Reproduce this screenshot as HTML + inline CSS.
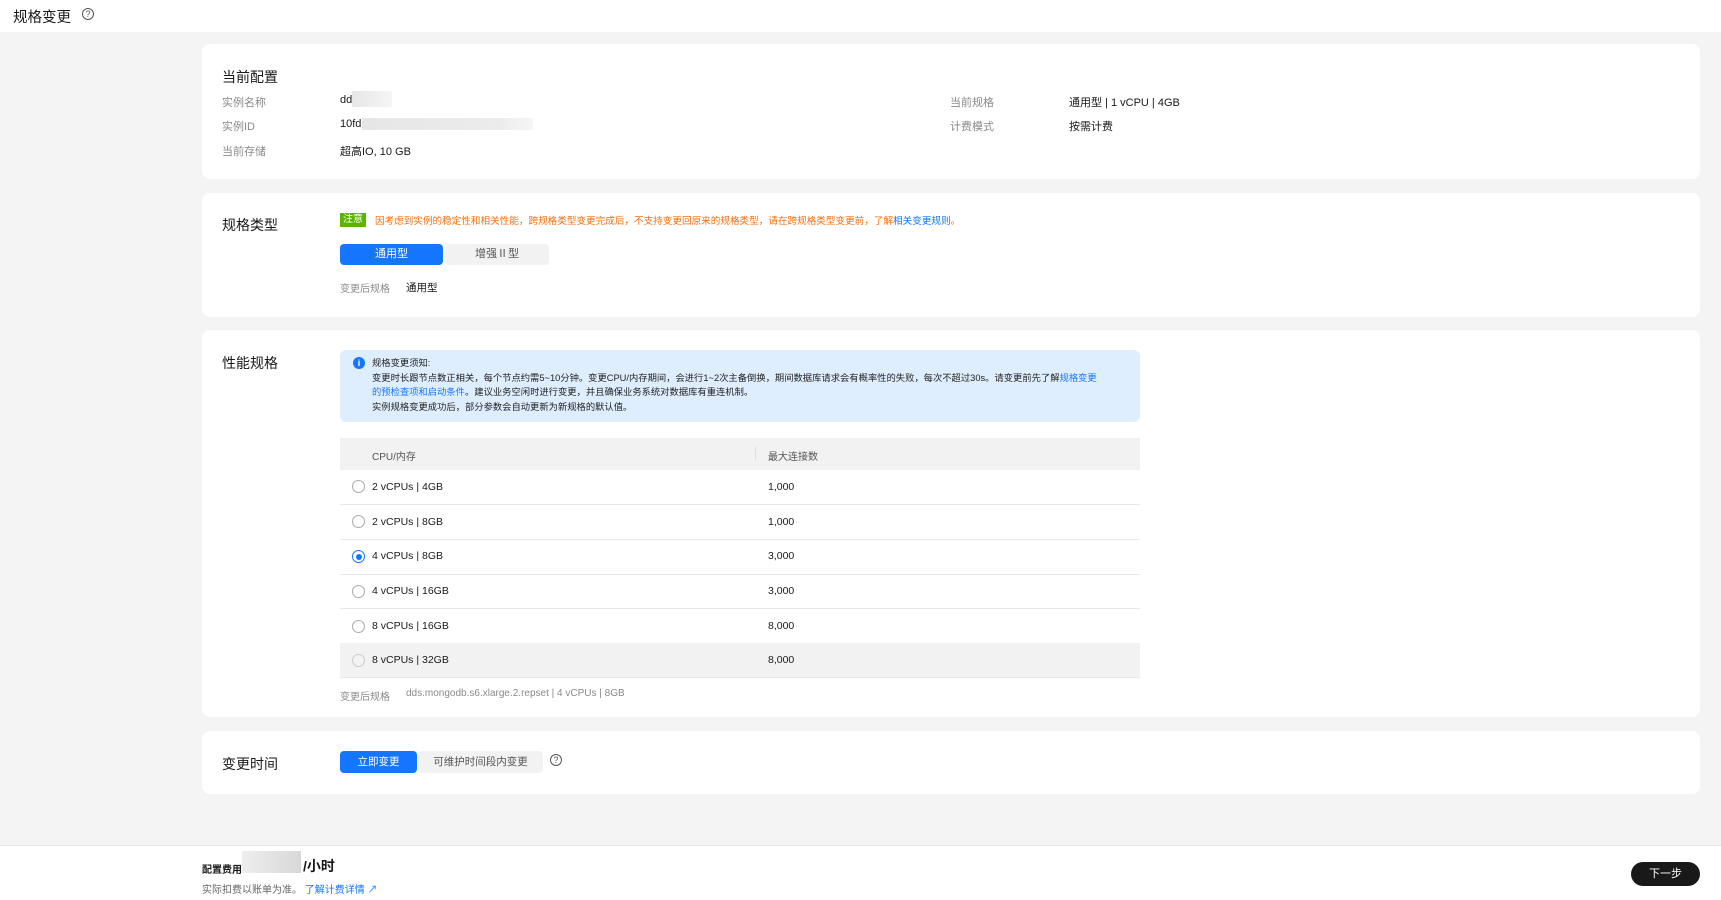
<!DOCTYPE html>
<html><head><meta charset="utf-8"><style>
*{margin:0;padding:0;box-sizing:border-box}
body{width:1721px;height:900px;background:#f4f4f4;font-family:"Liberation Sans","Noto Sans CJK SC",sans-serif;position:relative;overflow:hidden;color:#191919;font-size:11px}
.a{position:absolute;white-space:nowrap}
.card{position:absolute;left:202px;width:1498px;background:#fff;border-radius:8px}
.lbl{color:#8a8a8a}
.h{font-size:14px;color:#191919}
.help{display:inline-block;width:12px;height:12px;border:1px solid #555;border-radius:50%;font-size:9px;text-align:center;line-height:10px;color:#555}
.radio{position:absolute;left:352px;width:13px;height:13px;border:1px solid #aaa;border-radius:50%;background:#fff}
.row{position:absolute;left:340px;width:800px;height:35px;border-bottom:1px solid #e8e8e8}
</style></head><body>
<div class="a" style="left:0;top:0;width:1721px;height:32px;background:#fff"></div>
<div class="a h" style="left:13px;top:6px;font-size:14.5px">规格变更</div>
<div class="a help" style="left:82px;top:8px">?</div>

<div class="card" style="top:44px;height:135px"></div>
<div class="a h" style="left:222px;top:67px">当前配置</div>
<div class="a lbl" style="left:222px;top:94px">实例名称</div>
<div class="a" style="left:340px;top:94px">dd</div>
<div class="a" style="left:352px;top:91px;width:40px;height:16px;background:linear-gradient(90deg,#e6e6e6,#f6f6f6)"></div>
<div class="a lbl" style="left:222px;top:118px">实例ID</div>
<div class="a" style="left:340px;top:118px">10fd·</div>
<div class="a" style="left:362px;top:118px;width:171px;height:12px;background:linear-gradient(90deg,#e6e6e6,#ececec 80%,#f6f6f6)"></div>
<div class="a lbl" style="left:222px;top:143px">当前存储</div>
<div class="a" style="left:340px;top:143px">超高IO, 10 GB</div>
<div class="a lbl" style="left:950px;top:94px">当前规格</div>
<div class="a" style="left:1069px;top:94px">通用型 | 1 vCPU | 4GB</div>
<div class="a lbl" style="left:950px;top:118px">计费模式</div>
<div class="a" style="left:1069px;top:118px">按需计费</div>

<div class="card" style="top:193px;height:124px"></div>
<div class="a h" style="left:222px;top:215px">规格类型</div>
<div class="a" style="left:340px;top:213px;width:26px;height:14px;background:#5cb300;color:#fff;text-align:center;line-height:14px;font-size:10px">注意</div>
<div class="a" style="left:375px;top:213px;color:#f66f0c;font-size:9.6px">因考虑到实例的稳定性和相关性能，跨规格类型变更完成后，不支持变更回原来的规格类型，请在跨规格类型变更前，了解<span style="color:#1476ff">相关变更规则</span>。</div>
<div class="a" style="left:340px;top:244px;width:103px;height:21px;background:#1476ff;border-radius:4px;color:#fff;text-align:center;line-height:21px">通用型</div>
<div class="a" style="left:445px;top:244px;width:104px;height:21px;background:#f2f2f2;border-radius:4px;color:#555;text-align:center;line-height:21px">增强Ⅱ型</div>
<div class="a lbl" style="left:340px;top:280px;font-size:10px">变更后规格</div>
<div class="a" style="left:406px;top:280px;font-size:10.5px">通用型</div>

<div class="card" style="top:330px;height:387px"></div>
<div class="a h" style="left:222px;top:353px">性能规格</div>
<div class="a" style="left:340px;top:350px;width:800px;height:72px;background:#dfeeff;border-radius:6px"></div>
<div class="a" style="left:353px;top:357px;width:12px;height:12px;border-radius:50%;background:#1476ff;color:#fff;font-size:9px;text-align:center;line-height:12px;font-weight:bold">i</div>
<div class="a" style="left:372px;top:356px;font-size:9.3px;line-height:14.5px;color:#222">规格变更须知:<br>变更时长跟节点数正相关，每个节点约需5~10分钟。变更CPU/内存期间，会进行1~2次主备倒换，期间数据库请求会有概率性的失败，每次不超过30s。请变更前先了解<span style="color:#1476ff">规格变更</span><br><span style="color:#1476ff">的预检查项和启动条件</span>。建议业务空闲时进行变更，并且确保业务系统对数据库有重连机制。<br>实例规格变更成功后，部分参数会自动更新为新规格的默认值。</div>
<div class="a" style="left:340px;top:438px;width:800px;height:32px;background:#f2f2f2"></div>
<div class="a" style="left:372px;top:448px;color:#555;font-size:10px">CPU/内存</div>
<div class="a" style="left:755px;top:447px;width:1px;height:13px;background:#ddd"></div>
<div class="a" style="left:768px;top:448px;color:#555;font-size:10px">最大连接数</div>
<div class="row" style="top:470px"></div><div class="radio" style="top:480px"></div><div class="a" style="left:372px;top:481px;font-size:10.5px">2 vCPUs | 4GB</div><div class="a" style="left:768px;top:481px;font-size:10.5px">1,000</div>
<div class="row" style="top:505px"></div><div class="radio" style="top:515px"></div><div class="a" style="left:372px;top:516px;font-size:10.5px">2 vCPUs | 8GB</div><div class="a" style="left:768px;top:516px;font-size:10.5px">1,000</div>
<div class="row" style="top:540px"></div><div class="radio" style="top:550px;border-color:#1476ff"><div style="position:absolute;left:2.5px;top:2.5px;width:6px;height:6px;border-radius:50%;background:#1476ff"></div></div><div class="a" style="left:372px;top:550px;font-size:10.5px">4 vCPUs | 8GB</div><div class="a" style="left:768px;top:550px;font-size:10.5px">3,000</div>
<div class="row" style="top:574px"></div><div class="radio" style="top:585px"></div><div class="a" style="left:372px;top:585px;font-size:10.5px">4 vCPUs | 16GB</div><div class="a" style="left:768px;top:585px;font-size:10.5px">3,000</div>
<div class="row" style="top:609px"></div><div class="radio" style="top:620px"></div><div class="a" style="left:372px;top:620px;font-size:10.5px">8 vCPUs | 16GB</div><div class="a" style="left:768px;top:620px;font-size:10.5px">8,000</div>
<div class="row" style="top:643px;background:#f2f2f2"></div><div class="radio" style="top:654px;background:#f2f2f2;border-color:#ccc"></div><div class="a" style="left:372px;top:654px;font-size:10.5px">8 vCPUs | 32GB</div><div class="a" style="left:768px;top:654px;font-size:10.5px">8,000</div>
<div class="a lbl" style="left:340px;top:688px;font-size:10px">变更后规格</div>
<div class="a lbl" style="left:406px;top:688px;font-size:10px">dds.mongodb.s6.xlarge.2.repset | 4 vCPUs | 8GB</div>

<div class="card" style="top:731px;height:63px"></div>
<div class="a h" style="left:222px;top:754px">变更时间</div>
<div class="a" style="left:340px;top:751px;width:77px;height:22px;background:#1476ff;border-radius:4px;color:#fff;text-align:center;line-height:22px;font-size:10.5px">立即变更</div>
<div class="a" style="left:418px;top:751px;width:125px;height:22px;background:#f2f2f2;border-radius:4px;color:#555;text-align:center;line-height:22px;font-size:10.5px">可维护时间段内变更</div>
<div class="a help" style="left:550px;top:754px">?</div>

<div class="a" style="left:0;top:845px;width:1721px;height:55px;background:#fff;border-top:1px solid #e5e5e5"></div>
<div class="a" style="left:202px;top:861px;font-weight:bold;font-size:10px">配置费用</div>
<div class="a" style="left:242px;top:851px;width:59px;height:22px;background:linear-gradient(90deg,#eee,#d8d8d8)"></div>
<div class="a" style="left:303px;top:856px;font-weight:bold;font-size:14px">/小时</div>
<div class="a" style="left:202px;top:881px;color:#666;font-size:10px">实际扣费以账单为准。 <span style="color:#1476ff">了解计费详情 ↗</span></div>
<div class="a" style="left:1631px;top:862px;width:69px;height:24px;background:#191919;border-radius:12px;color:#fff;text-align:center;line-height:24px">下一步</div>
</body></html>
